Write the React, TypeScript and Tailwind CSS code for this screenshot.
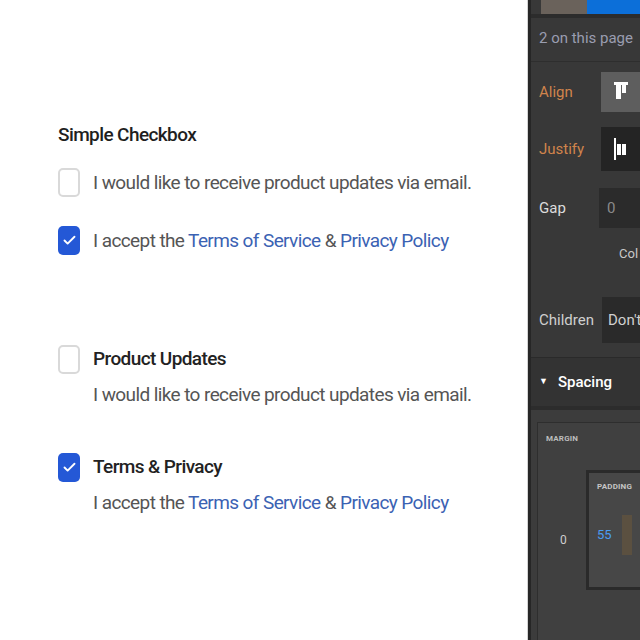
import { Check } from "lucide-react"

type Item = { title?: string; label: React.ReactNode; checked: boolean }

const Terms = () => (
  <>
    I accept the <span className="text-[#3b62b3]">Terms of Service</span> &amp;{" "}
    <span className="text-[#3b62b3]">Privacy Policy</span>
  </>
)

function Box({ checked }: { checked: boolean }) {
  return checked ? (
    <div className="flex h-[29px] w-[22px] shrink-0 items-center justify-center rounded-[5px] bg-[#2458d6]">
      <Check className="h-[15px] w-[15px] text-white" strokeWidth={3} />
    </div>
  ) : (
    <div className="h-[29px] w-[22px] shrink-0 rounded-[5px] border-2 border-[#d9d9d9] bg-white" />
  )
}

function Row({ title, label, checked }: Item) {
  return (
    <div className="flex items-start gap-[13px]">
      <Box checked={checked} />
      <div className="flex flex-col">
        {title && (
          <div className="text-[19px] font-medium leading-[27px] tracking-[-0.6px] text-[#222]">{title}</div>
        )}
        <div className={`text-[19px] leading-[29px] tracking-[-0.6px] text-[#555] ${title ? "mt-[8px]" : ""}`}>
          {label}
        </div>
      </div>
    </div>
  )
}

export default function App() {
  return (
    <div
      className="flex h-[640px] w-[640px] overflow-hidden bg-white"
      style={{ fontFamily: "Roboto, 'Liberation Sans', sans-serif" }}
    >
      {/* checkbox demo */}
      <div className="flex w-[527px] shrink-0 flex-col pl-[58px] pt-[122px]">
        <div className="text-[19px] font-medium leading-[26px] tracking-[-0.6px] text-[#1f1f1f]">Simple Checkbox</div>
        <div className="mt-[20px] flex flex-col gap-[29px]">
          <Row checked={false} label="I would like to receive product updates via email." />
          <Row checked label={<Terms />} />
        </div>
        <div className="mt-[90px] flex flex-col gap-[44px]">
          <Row checked={false} title="Product Updates" label="I would like to receive product updates via email." />
          <Row checked title="Terms & Privacy" label={<Terms />} />
        </div>
      </div>

      {/* style panel */}
      <div className="flex min-w-0 flex-1 border-l border-[#d4d4d4]">
        <div className="flex min-w-0 flex-1 flex-col overflow-hidden whitespace-nowrap border-l-[3px] border-[#262626] bg-[#383838] text-[15px]">
          <div className="flex h-[14px] pl-[10px]">
            <div className="w-[46px] bg-[#6a625b]" />
            <div className="flex-1 bg-[#0c6fd9]" />
          </div>
          <div className="h-[4px] bg-[#2c2c2c]" />
          <div className="flex h-[40px] items-center pl-[8px] text-[#9a9db0]">2 on this page</div>
          <div className="h-[4px] border-b border-[#2e2e2e]" />

          <div className="mt-[2px] flex h-[56px] items-center">
            <div className="w-[70px] pl-[8px] text-[#d0844c]">Align</div>
            <div className="flex h-[40px] flex-1 items-center justify-center bg-[#5e5e5e]">
              <svg width="16" height="22" viewBox="0 0 16 22">
                <rect x="1" y="1" width="14" height="3" fill="#fff" />
                <rect x="3" y="4" width="5" height="14" fill="#fff" />
                <rect x="9" y="4" width="4" height="8" fill="#fff" />
              </svg>
            </div>
          </div>
          <div className="flex h-[58px] items-center">
            <div className="w-[70px] pl-[8px] text-[#d0844c]">Justify</div>
            <div className="flex h-[44px] flex-1 items-center justify-center bg-[#242424]">
              <svg width="16" height="26" viewBox="0 0 16 26">
                <rect x="1" y="2" width="2" height="22" fill="#fff" />
                <rect x="4" y="8" width="4" height="11" fill="#fff" />
                <rect x="9" y="8" width="4" height="11" fill="#fff" />
              </svg>
            </div>
          </div>
          <div className="mt-[2px] flex h-[56px] items-center">
            <div className="w-[68px] pl-[8px] text-[#dcdcdc]">Gap</div>
            <div className="flex h-[40px] flex-1 items-center bg-[#2b2b2b] pl-[8px] text-[#8a8a8a]">0</div>
          </div>
          <div className="flex h-[36px] items-center pl-[88px] text-[13px] text-[#c8c8c8]">Col</div>
          <div className="h-[24px]" />
          <div className="flex h-[48px] items-center">
            <div className="w-[71px] pl-[8px] text-[#cfcfcf]">Children</div>
            <div className="flex h-[46px] flex-1 items-center overflow-hidden bg-[#2a2a2a] pl-[6px] text-[#d0d0d0]">
              Don't
            </div>
          </div>
          <div className="h-[14px] border-b border-[#2a2a2a]" />
          <div className="flex h-[48px] items-center gap-[10px] bg-[#333] pl-[8px] font-medium text-white">
            <span className="text-[9px]">▼</span>
            Spacing
          </div>
          <div className="h-[4px] bg-[#2c2c2c]" />
          <div className="flex flex-1 bg-[#3c3c3c] pl-[6px] pt-[12px]">
            <div className="flex flex-1 flex-col border-l border-t border-[#2e2e2e] bg-[#404040] pl-[8px] pt-[10px]">
              <div className="text-[8px] font-bold tracking-wide text-[#bdbdbd]">MARGIN</div>
              <div className="mt-[25px] flex">
                <div className="flex w-[40px] items-center pl-[14px] pt-[20px] text-[12px] text-[#cfcfcf]">0</div>
                <div className="flex h-[120px] flex-1 flex-col border-b-[3px] border-l-[3px] border-t-[3px] border-[#2a2a2a] bg-[#474747] pl-[8px] pt-[8px]">
                  <div className="text-[8px] font-bold tracking-wide text-[#c4c4c4]">PADDING</div>
                  <div className="mt-[22px] flex items-center">
                    <span className="text-[13px] text-[#4a9cf2]">55</span>
                    <div className="ml-[10px] h-[40px] w-[10px] bg-[#5b5040]" />
                  </div>
                </div>
              </div>
            </div>
          </div>
        </div>
      </div>
    </div>
  )
}
